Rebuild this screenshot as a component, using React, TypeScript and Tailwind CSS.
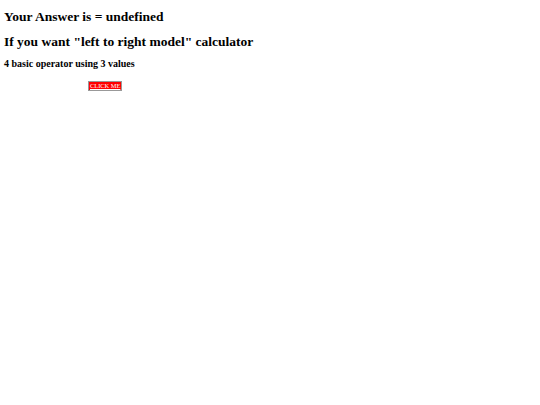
import React from 'react';

export default function App() {
  return (
    <div className="min-h-[405px] bg-white text-black px-[4px] pt-[8px]" style={{ fontFamily: '"Liberation Serif", "Times New Roman", serif' }}>
      <h2 className="text-[13.5px] font-bold leading-[17px]">Your Answer is = undefined</h2>
      <h2 className="text-[13.5px] font-bold leading-[17px] mt-[8px]">If you want "left to right model" calculator</h2>
      <h4 className="text-[10px] font-bold leading-[12px] mt-[8px]">4 basic operator using 3 values</h4>
      <div className="mt-[11px] pl-[84px] flex">
        <button className="bg-[#ff0000] text-white underline whitespace-nowrap text-[6.4px] leading-[8px] px-[1px] border border-[#999] h-[10px]" style={{ fontFamily: '"Liberation Serif", serif' }}>CLICK ME</button>
      </div>
    </div>
  );
}
